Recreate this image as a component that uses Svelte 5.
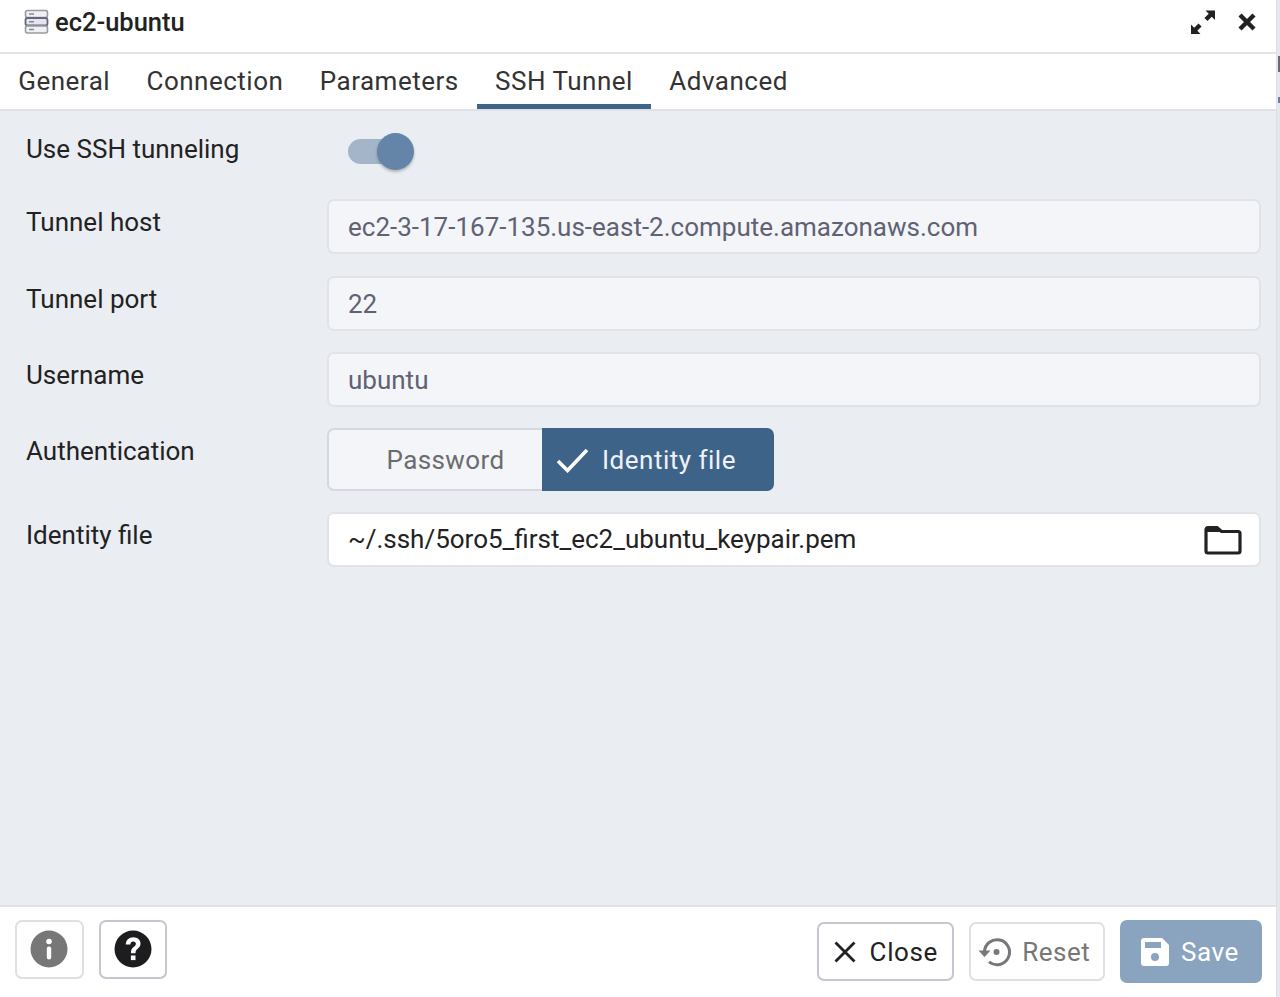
<script lang="ts">
    const tabs = ["General", "Connection", "Parameters", "SSH Tunnel", "Advanced"];
    const active = "SSH Tunnel";

    const fields = [
        { label: "Tunnel host", value: "ec2-3-17-167-135.us-east-2.compute.amazonaws.com" },
        { label: "Tunnel port", value: "22" },
        { label: "Username", value: "ubuntu" },
    ];
</script>

<div class="page">
    <div class="dialog">
        <header class="title-bar">
            <svg class="server-icon" width="26" height="26" viewBox="0 0 26 26">
                <rect x="1.5" y="1.5" width="22" height="7" rx="2" fill="#eef0f4" stroke="#9a9aa2" stroke-width="1.6" />
                <rect x="1.5" y="9" width="22" height="7.5" rx="2" fill="#e4e5ee" stroke="#66667c" stroke-width="1.8" />
                <rect x="1.5" y="17" width="22" height="7" rx="2" fill="#eef0f4" stroke="#9a9aa2" stroke-width="1.6" />
                <path d="M5 5h5M5 12.8h5M5 20.5h5" stroke="#8a8a92" stroke-width="1.6" />
            </svg>
            <span class="title">ec2-ubuntu</span>
            <svg class="expand" width="26" height="26" viewBox="0 0 26 26" fill="#222">
                <path d="M15.500 1.500H25V11l-3.200-3.200-4.300 4.300-3.100-3.100 4.300-4.300zM1 25v-9.500l3.200 3.200 4.300-4.300 3.100 3.100-4.300 4.300L10.500 25z" />
            </svg>
            <svg class="close-x" width="20" height="20" viewBox="0 0 20 20">
                <path d="M3 3l14 14M17 3L3 17" stroke="#222" stroke-width="4.400" />
            </svg>
        </header>

        <nav class="tabs">
            {#each tabs as tab}
                <div class="tab" class:active={tab === active}>{tab}</div>
            {/each}
        </nav>

        <main class="body">
            <div class="row toggle-row">
                <span class="label">Use SSH tunneling</span>
                <div class="switch"><div class="track"></div><div class="thumb"></div></div>
            </div>

            {#each fields as field}
                <div class="row">
                    <span class="label">{field.label}</span>
                    <div class="input disabled">{field.value}</div>
                </div>
            {/each}

            <div class="row">
                <span class="label">Authentication</span>
                <div class="segments">
                    <div class="seg off">Password</div>
                    <div class="seg on">
                        <svg width="34" height="26" viewBox="0 0 34 26" fill="none">
                            <path d="M2 14l9.500 9.500L31 3" stroke="#fff" stroke-width="3.600" />
                        </svg>
                        Identity file
                    </div>
                </div>
            </div>

            <div class="row">
                <span class="label">Identity file</span>
                <div class="input file">
                    <span>~/.ssh/5oro5_first_ec2_ubuntu_keypair.pem</span>
                    <svg width="38" height="30" viewBox="0 0 38 30" fill="none">
                        <path d="M2 4.500a2 2 0 0 1 2-2h9l4.500 4H34a2 2 0 0 1 2 2V26a2 2 0 0 1-2 2H4a2 2 0 0 1-2-2z" stroke="#222" stroke-width="3.200" />
                        <path d="M2 3h11l4.500 4H2z" fill="#222" />
                    </svg>
                </div>
            </div>
        </main>

        <footer class="footer">
            <button class="btn square faint">
                <svg width="38" height="38" viewBox="0 0 38 38">
                    <circle cx="19" cy="19" r="18.500" fill="#777" />
                    <circle cx="19" cy="11.500" r="2.800" fill="#fff" />
                    <rect x="16.800" y="16.500" width="4.400" height="13" rx="2" fill="#fff" />
                </svg>
            </button>
            <button class="btn square">
                <svg width="38" height="38" viewBox="0 0 38 38">
                    <circle cx="19" cy="19" r="18.500" fill="#1d1d1f" />
                    <path d="M11.800 14.500c0-4.300 3.200-7.300 7.400-7.300 4.300 0 7.300 2.800 7.300 6.300 0 5-5 4.900-5 9.700h-4.600c0-6.600 5-6.200 5-9.400 0-1.400-1.100-2.400-2.700-2.400-1.700 0-2.800 1.200-2.800 3.100z" fill="#fff" />
                    <rect x="16.900" y="25.500" width="4.600" height="4.600" fill="#fff" />
                </svg>
            </button>
            <div class="spacer"></div>
            <button class="btn text">
                <svg width="24" height="24" viewBox="0 0 24 24">
                    <path d="M2.500 2.500l19 19M21.500 2.500l-19 19" stroke="#222" stroke-width="2.800" />
                </svg>
                Close
            </button>
            <button class="btn text faint muted">
                <svg width="34" height="30" viewBox="0 0 34 30" fill="none">
                    <path d="M7.500 15A12.500 12.500 0 1 1 12 24.800" stroke="#777" stroke-width="3" />
                    <path d="M1.500 13.500h12L7.500 20z" fill="#777" />
                    <circle cx="19.500" cy="15" r="3" fill="#777" />
                </svg>
                Reset
            </button>
            <button class="btn save">
                <svg width="28" height="28" viewBox="0 0 28 28">
                    <path d="M3 0h18l7 7v18a3 3 0 0 1-3 3H3a3 3 0 0 1-3-3V3a3 3 0 0 1 3-3z" fill="#fff" />
                    <rect x="4" y="4" width="16" height="6" fill="#8aa3bf" />
                    <circle cx="14" cy="19" r="4" fill="#8aa3bf" />
                </svg>
                Save
            </button>
        </footer>
    </div>
    <div class="backdrop">
        <div class="peek-dark"></div>
        <div class="peek-blue"></div>
    </div>
</div>

<style>
    :global(body) {
        margin: 0;
        background: #fff;
    }
    .page {
        width: 1280px;
        height: 997px;
        overflow: hidden;
        display: flex;
        font-family: Roboto, "Liberation Sans", sans-serif;
    }
    .dialog {
        width: 1277px;
        height: 997px;
        flex: none;
        box-sizing: border-box;
        display: flex;
        flex-direction: column;
        border-right: 1px solid #dfe1e6;
        color: #222;
    }
    .backdrop {
        flex: 1;
        background: #e6e7ec;
        padding: 56px 0 0 1px;
    }
    .peek-dark {
        height: 16px;
        background: #666b75;
    }
    .peek-blue {
        height: 6px;
        margin-top: 25px;
        background: #6f7f9c;
    }
    .title-bar {
        flex: none;
        display: flex;
        align-items: center;
        padding: 0 19px 8px 24px;
        box-sizing: border-box;
        border-bottom: 2px solid #e3e4e7;
        height: 54px;
    }
    .server-icon {
        margin-right: 5px;
    }
    .title {
        font-size: 25.500px;
        font-weight: 500;
        flex: 1;
        color: #222;
    }
    .expand {
        margin-right: 21px;
    }
    .tabs {
        height: 57px;
        flex: none;
        display: flex;
        box-sizing: border-box;
        border-bottom: 2px solid #dfe1e6;
    }
    .tab {
        padding: 0 18.200px;
        font-size: 26px;
        letter-spacing: 0.5px;
        line-height: 54px;
        color: #333;
        height: 55px;
        box-sizing: border-box;
    }
    .tab.active {
        border-bottom: 5px solid #3e6389;
    }
    .body {
        flex: 1;
        background: #eaedf2;
        padding: 21px 15px 0 26px;
        display: flex;
        flex-direction: column;
        gap: 21.400px;
    }
    .row {
        display: grid;
        grid-template-columns: 301px 1fr;
    }
    .label {
        font-size: 26px;
        line-height: 47px;
        color: #222;
    }
    .toggle-row {
        height: 45.800px;
    }
    .toggle-row .label {
        line-height: 34px;
    }
    .switch {
        position: relative;
        margin-left: 21px;
        width: 66px;
        height: 38px;
    }
    .track {
        position: absolute;
        left: 0;
        top: 7px;
        width: 58px;
        height: 25px;
        border-radius: 13px;
        background: #a3b5c9;
    }
    .thumb {
        position: absolute;
        right: 0;
        top: 1px;
        width: 37px;
        height: 37px;
        border-radius: 50%;
        background: #6485a8;
        box-shadow: 0 2px 3px rgba(0, 0, 0, 0.25);
    }
    .input {
        height: 55px;
        box-sizing: border-box;
        border: 2px solid #e1e3e9;
        border-radius: 7px;
        padding: 0 19px;
        font-size: 26px;
        line-height: 53px;
    }
    .disabled {
        background: #f3f5f9;
        color: #5f6273;
    }
    .file {
        background: #fff;
        color: #222;
        display: flex;
        align-items: center;
        justify-content: space-between;
        padding-right: 17px;
    }
    .segments {
        display: flex;
        height: 62.500px;
        font-size: 26px;
    }
    .seg {
        box-sizing: border-box;
        display: flex;
        align-items: center;
    }
    .off {
        width: 215px;
        background: #f3f5f9;
        color: #6c6c6c;
        border: 2px solid #d5d8df;
        border-right: 0;
        border-radius: 7px 0 0 7px;
        justify-content: center;
        padding-left: 20px;
        letter-spacing: 0.4px;
    }
    .on {
        width: 232px;
        background: #3e6389;
        color: #eef2f6;
        border-radius: 0 7px 7px 0;
        gap: 12px;
        padding-left: 14px;
        letter-spacing: 0.5px;
    }
    .footer {
        height: 92px;
        flex: none;
        box-sizing: border-box;
        background: #fff;
        border-top: 2px solid #dfe1e6;
        display: flex;
        align-items: center;
        padding: 0 14px 1px 15px;
        gap: 15px;
    }
    .spacer {
        flex: 1;
    }
    .btn {
        box-sizing: border-box;
        height: 59px;
        background: #fff;
        border: 2px solid #c4c6d0;
        border-radius: 7px;
        display: flex;
        align-items: center;
        justify-content: center;
        font-family: inherit;
        font-size: 26px;
        letter-spacing: 0.6px;
        color: #222;
        padding: 0;
    }
    .square {
        width: 68.500px;
        margin-bottom: 5px;
    }
    .faint {
        border-color: #dfe0e5;
    }
    .text {
        width: 136.500px;
        gap: 13px;
    }
    .muted {
        color: #777;
        gap: 11px;
        letter-spacing: 0.5px;
        padding-right: 6px;
    }
    .save {
        width: 142px;
        height: 63px;
        background: #8aa3bf;
        border: 0;
        color: #fff;
        gap: 12px;
        padding-right: 2px;
    }
</style>
